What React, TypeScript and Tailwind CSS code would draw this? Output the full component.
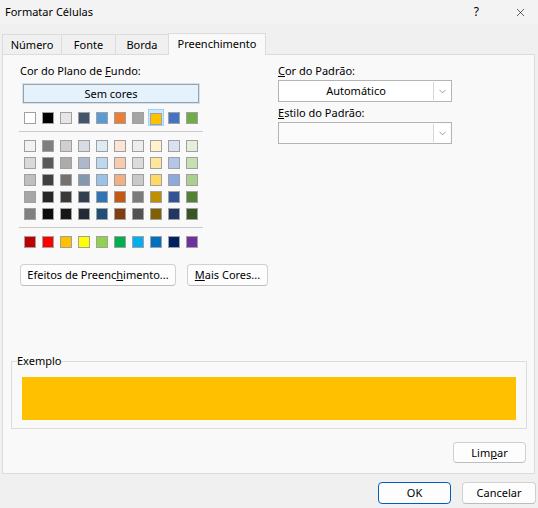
import { X, ChevronDown } from "lucide-react";

const themeRow = ["#ffffff", "#000000", "#e7e6e6", "#44546a", "#5b9bd5", "#ed7d31", "#a5a5a5", "#ffc000", "#4472c4", "#70ad47"];

const tints = [
  ["#f2f2f2", "#7f7f7f", "#d0cece", "#d6dce4", "#ddebf7", "#fce4d6", "#ededed", "#fff2cc", "#d9e1f2", "#e2efda"],
  ["#d9d9d9", "#595959", "#aeaaaa", "#adb9ca", "#bdd7ee", "#f8cbad", "#dbdbdb", "#ffe699", "#b4c6e7", "#c6e0b4"],
  ["#bfbfbf", "#404040", "#767171", "#8497b0", "#9bc2e6", "#f4b084", "#c9c9c9", "#ffd966", "#8ea9db", "#a9d08e"],
  ["#a6a6a6", "#262626", "#3b3838", "#333f4f", "#2f75b5", "#c65911", "#7b7b7b", "#bf8f00", "#305496", "#548235"],
  ["#808080", "#0d0d0d", "#171616", "#222a35", "#1f4e78", "#833c0c", "#525252", "#806000", "#203764", "#375623"],
];

const standard = ["#c00000", "#ff0000", "#ffc000", "#ffff00", "#92d050", "#00b050", "#00b0f0", "#0070c0", "#002060", "#7030a0"];

const tabs = [
  { label: "Número", w: "w-[60px]" },
  { label: "Fonte", w: "w-[55px]" },
  { label: "Borda", w: "w-[54px]" },
];

function Swatch({ color }: { color: string }) {
  return <div className="h-[12px] w-[12px] border border-[#a0a0a0]" style={{ backgroundColor: color }} />;
}

function SwatchRow({ colors }: { colors: string[] }) {
  return (
    <div className="ml-[5px] flex gap-[6px]">
      {colors.map((c, i) => (
        <Swatch key={i} color={c} />
      ))}
    </div>
  );
}

function Combo({ value, white }: { value?: string; white?: boolean }) {
  return (
    <div className={`mt-[1px] flex h-[22px] w-[174px] border border-[#b4b4b4] ${white ? "bg-white" : "bg-[#fbfbfb]"}`}>
      <div className="flex flex-1 items-center justify-center leading-[16px]">{value}</div>
      <div className="my-px mr-px flex w-[17px] items-center justify-center border-l border-[#d6d6d6] bg-white">
        <ChevronDown size={11} strokeWidth={1.3} className="text-[#606060]" />
      </div>
    </div>
  );
}

function Button({ children, className = "" }: { children: React.ReactNode; className?: string }) {
  return (
    <button className={`flex shrink-0 items-center justify-center rounded-[4px] border border-[#d0d0d0] border-b-[#bdbdbd] bg-[#fdfdfd] leading-[16px] ${className}`}>
      <span className="whitespace-nowrap">{children}</span>
    </button>
  );
}

export default function App() {
  return (
    <div className="flex h-[508px] w-[538px] flex-col overflow-hidden bg-[#f0f0f0] font-['Noto_Sans',sans-serif] text-[11px] text-black">
      <div className="flex h-[24px] items-center justify-between bg-[#f3f3f3] pl-[5px]">
        <span className="text-[11px] leading-[16px]">Formatar Células</span>
        <div className="flex items-center pr-[11px]">
          <span className="mr-[35px] text-[12px] leading-[16px]">?</span>
          <X size={13} strokeWidth={1.1} />
        </div>
      </div>

      <div className="flex h-[30px] items-end pl-[2px]">
        {tabs.map((t, i) => (
          <div
            key={t.label}
            className={`flex h-[20px] ${t.w} ${i > 0 ? "-ml-px" : ""} items-center justify-center border-x border-t border-[#dcdcdc] bg-[#f0f0f0] leading-[16px]`}
          >
            {t.label}
          </div>
        ))}
        <div className="relative z-10 -mb-px -ml-px flex h-[22px] w-[98px] items-center justify-center border-x border-t border-[#dcdcdc] bg-[#f9f9f9] pb-[2px] leading-[16px]">
          Preenchimento
        </div>
      </div>

      <div className="ml-[2px] flex h-[420px] w-[533px] flex-col border border-[#dcdcdc] bg-[#f9f9f9]">
        <div className="flex pt-[8px]">
          <div className="ml-[16px] flex w-[184px] flex-col">
            <div className="pl-[1px] leading-[16px]">
              Cor do Plano de <u>F</u>undo:
            </div>
            <button className="ml-[4px] mt-[5px] flex h-[19px] w-[176px] items-center justify-center border border-[#a0a0a0] bg-[#e5f1fb] leading-[16px] shadow-[0_0_0_1px_#cce4f7]">
              Sem cores
            </button>
            <div className="ml-[3px] mt-[6px] flex gap-[2px]">
              {themeRow.map((c, i) => (
                <div
                  key={c}
                  className={`flex h-[17px] w-[16px] justify-center pt-[3px] ${i === 7 ? "border border-[#99d1ff] bg-[#cce8ff] pt-[2px]" : ""}`}
                >
                  <Swatch color={c} />
                </div>
              ))}
            </div>
            <div className="mt-[5px] h-px bg-[#c9c9c9]" />
            <div className="mt-[8px] flex flex-col gap-[5px]">
              {tints.map((row, i) => (
                <SwatchRow key={i} colors={row} />
              ))}
            </div>
            <div className="mt-[7px] h-px bg-[#c9c9c9]" />
            <div className="mt-[8px]">
              <SwatchRow colors={standard} />
            </div>
            <div className="mt-[16px] flex gap-[11px] pl-[1px]">
              <Button className="h-[22px] w-[156px]">
                Efeitos de Preenc<u>h</u>imento...
              </Button>
              <Button className="h-[22px] w-[81px]">
                <u>M</u>ais Cores...
              </Button>
            </div>
          </div>

          <div className="ml-[75px] flex w-[174px] flex-col">
            <div className="leading-[16px]">
              <u>C</u>or do Padrão:
            </div>
            <Combo value="Automático" white />
            <div className="mt-[3px] leading-[16px]">
              <u>E</u>stilo do Padrão:
            </div>
            <Combo />
          </div>
        </div>

        <fieldset className="ml-[8px] mt-[67px] w-[516px] border border-[#dcdcdc] px-[5px] pb-[8px]">
          <legend className="leading-[16px]">Exemplo</legend>
          <div className="ml-[5px] mt-[8px] h-[43px] w-[494px] bg-[#ffc000]" />
        </fieldset>

        <div className="mt-[13px] flex justify-end pr-[8px]">
          <Button className="h-[21px] w-[73px]">
            Lim<u>p</u>ar
          </Button>
        </div>
      </div>

      <div className="mt-[8px] flex justify-end gap-[11px] pr-[2px]">
        <button className="flex h-[22px] w-[73px] items-center justify-center rounded-[4px] border border-[#005fb8] bg-[#fdfdfd] leading-[16px]">
          OK
        </button>
        <Button className="h-[22px] w-[74px]">Cancelar</Button>
      </div>
    </div>
  );
}
